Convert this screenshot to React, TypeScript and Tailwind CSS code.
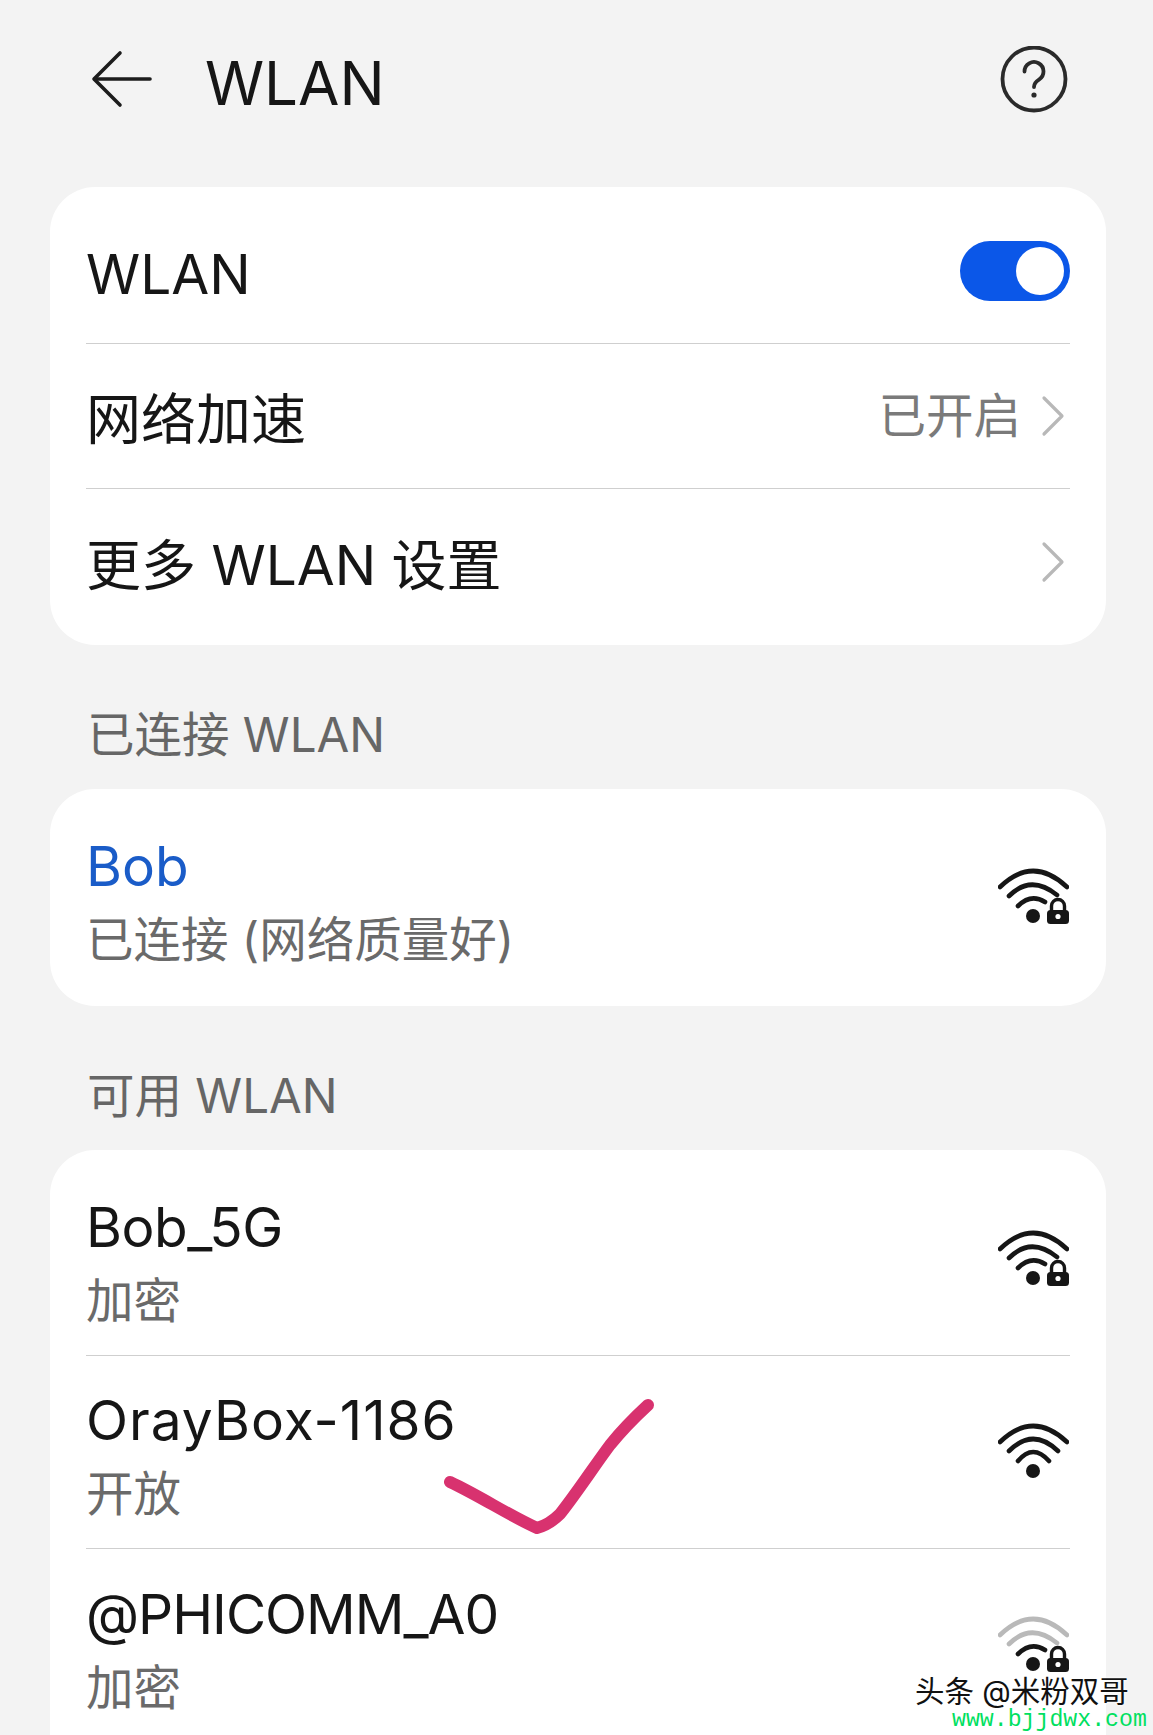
const font = { fontFamily: 'Inter, "Noto Sans CJK SC", "Noto Sans", sans-serif' };

function Wifi({ lock, weak }: { lock?: boolean; weak?: boolean }) {
  const faint = weak ? "#b9b9b9" : "#161616";
  return (
    <svg width="71" height="65" viewBox="39 19 71 65" fill="none" stroke="#161616" strokeWidth="4.6" strokeLinecap="round" className="mr-[1px]">
      <path d="M41 41Q74 9 108 41" stroke={faint} />
      {lock ? <path d="M50 50Q72 28 98 49" stroke={faint} /> : <path d="M50 50Q74 26 99 50" stroke={faint} />}
      {lock ? <path d="M59 60Q72 47 86 56" /> : <path d="M59 60Q74 42 90 60" />}
      <circle cx="74" cy="70" r="7" fill="#161616" stroke="none" />
      {lock && (
        <>
          <path d="M92.5 66V60a6.5 6.5 0 0 1 13 0V66" strokeWidth="3.4" />
          <rect x="88" y="64" width="22" height="14" rx="3.5" fill="#161616" stroke="none" />
          <circle cx="99" cy="70.5" r="2.6" fill="#fff" stroke="none" />
        </>
      )}
    </svg>
  );
}

function Chevron() {
  return (
    <svg width="24" height="42" viewBox="0 0 24 42" fill="none" stroke="#b8b8b8" strokeWidth="3.2" strokeLinecap="round" strokeLinejoin="round" className="ml-[20px] mr-[5px]">
      <path d="M3 3L21 21L3 39" />
    </svg>
  );
}

function SectionLabel({ text }: { text: string }) {
  return (
    <div className="flex h-[144px] items-center px-[87px] pt-[36px] text-[47.5px] leading-[60px] text-[#666666]">{text}</div>
  );
}

function Network({ name, sub, blue, lock, weak, border, nameClass }: { name: string; sub: string; blue?: boolean; lock?: boolean; weak?: boolean; border?: boolean; nameClass?: string }) {
  return (
    <div className={`flex h-[193px] items-center justify-between ${border ? "border-b border-[#cfcfcf]" : ""}`}>
      <div className="flex flex-col pt-[10px]">
        <div className={`text-[55px] leading-[74px] ${blue ? "text-[#1a5cc8]" : "text-[#161616]"} ${nameClass ?? ""}`}>{name}</div>
        <div className="text-[47.5px] leading-[74px] text-[#6a6a6a]">{sub}</div>
      </div>
      <Wifi lock={lock} weak={weak} />
    </div>
  );
}

export default function App() {
  return (
    <div style={font} className="relative h-[1735px] w-[1153px] overflow-hidden bg-[#f3f3f3]">
      <header className="flex h-[187px] items-start justify-between pl-[90px] pr-[87px] pt-[49px]">
        <div className="flex items-start">
          <svg width="64" height="60" viewBox="0 0 64 60" fill="none" stroke="#1c1c1c" strokeWidth="3.6" strokeLinecap="round">
            <path d="M30 4L4 30L30 56" strokeLinejoin="round" />
            <path d="M5 30H60" />
          </svg>
          <div className="ml-[51px] mt-[-2px] text-[60px] leading-[72px] text-[#161616]">WLAN</div>
        </div>
        <svg width="68" height="68" viewBox="0 0 68 68" fill="none" stroke="#2a2a2a" strokeWidth="3.8" strokeLinecap="round" className="mr-[-2px] mt-[-3px]">
          <circle cx="34" cy="33" r="31.5" />
          <path d="M24.5 25.5a9.5 9.5 0 1 1 14.5 8.1c-3 1.9-5 3.5-5 7.4" />
          <circle cx="34" cy="49" r="2.6" fill="#2a2a2a" stroke="none" />
        </svg>
      </header>

      <main className="ml-[50px] mr-[47px]">
        <section className="rounded-[45px] bg-white px-[36px] pb-[11px] pt-[12px]">
          <div className="flex h-[145px] items-center justify-between border-b border-[#cfcfcf]">
            <div className="pt-[6px] text-[55px] leading-[72px] text-[#161616]">WLAN</div>
            <div className="flex h-[60px] w-[110px] items-center justify-end rounded-full bg-[#0b57e8] pr-[6px]">
              <div className="h-[48px] w-[48px] rounded-full bg-white" />
            </div>
          </div>
          <div className="flex h-[145px] items-center justify-between border-b border-[#cfcfcf]">
            <div className="pt-[6px] text-[55px] leading-[72px] text-[#161616]">网络加速</div>
            <div className="flex items-center">
              <span className="text-[47.5px] leading-[60px] text-[#7a7a7a]">已开启</span>
              <Chevron />
            </div>
          </div>
          <div className="flex h-[145px] items-center justify-between">
            <div className="pt-[6px] text-[55px] leading-[72px] text-[#161616]">更多 WLAN 设置</div>
            <Chevron />
          </div>
        </section>
      </main>

      <SectionLabel text="已连接 WLAN" />

      <section className="ml-[50px] mr-[47px] rounded-[45px] bg-white px-[36px] py-[12px]">
        <Network name="Bob" sub="已连接 (网络质量好)" blue lock />
      </section>

      <SectionLabel text="可用 WLAN" />

      <section className="ml-[50px] mr-[47px] rounded-t-[45px] bg-white px-[36px] pt-[13px]">
        <Network name="Bob_5G" sub="加密" lock border nameClass="tracking-[-0.5px]" />
        <Network name="OrayBox-1186" sub="开放" border nameClass="tracking-[1px]" />
        <Network name="@PHICOMM_A0" sub="加密" lock weak nameClass="tracking-[-1px]" />
      </section>

      <svg width="240" height="160" viewBox="0 0 240 160" fill="none" className="absolute left-[430px] top-[1390px]">
        <path d="M20 92C50 106 80 126 107 138C118 135 124 130 130 124C146 104 165 75 180 55C192 40 205 27 218 15" stroke="#d8326f" strokeWidth="12" strokeLinecap="round" strokeLinejoin="round" />
      </svg>

      <div className="absolute left-[915px] top-[1672px] text-[29.5px] leading-[38px] text-[#111111] [text-shadow:0_0_3px_#ffffff,0_0_3px_#ffffff]">头条 @米粉双哥</div>
      <div className="absolute left-[952px] top-[1707px] font-['Liberation_Mono'] text-[23.2px] leading-[26px] text-[#00e060]">www.bjjdwx.com</div>
    </div>
  );
}
